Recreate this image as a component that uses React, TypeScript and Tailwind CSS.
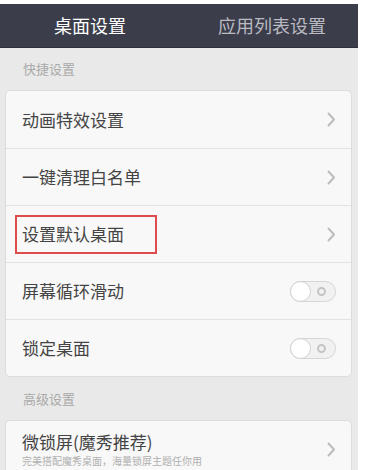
import React from 'react';

const font = { fontFamily: '"Noto Sans CJK SC", "Noto Sans", sans-serif' };

function Chevron() {
  return (
    <svg width="9" height="15" viewBox="0 0 9 15" fill="none" aria-hidden="true">
      <path d="M1.5 1.5 L7 7.5 L1.5 13.5" stroke="#bcbcbc" strokeWidth="2" strokeLinecap="round" strokeLinejoin="round" />
    </svg>
  );
}

function Toggle() {
  return (
    <div className="relative h-[21px] w-[46px] rounded-full border border-[#d6d6d6] bg-[#f1f1f1]">
      <div className="absolute left-[-1px] top-[-1px] h-[21px] w-[21px] rounded-full border border-[#d0d0d0] bg-white" />
      <div className="absolute right-[9px] top-[5px] h-[9px] w-[9px] rounded-full border-2 border-[#c4c4c4]" />
    </div>
  );
}

type Row = { label: string; kind: 'link' | 'toggle'; marked?: boolean };

const quick: Row[] = [
  { label: '动画特效设置', kind: 'link' },
  { label: '一键清理白名单', kind: 'link' },
  { label: '设置默认桌面', kind: 'link', marked: true },
  { label: '屏幕循环滑动', kind: 'toggle' },
  { label: '锁定桌面', kind: 'toggle' },
];

export default function App() {
  return (
    <div className="h-[470px] w-[367px] overflow-hidden bg-white pt-[4px]" style={font}>
      <div className="w-[358px]">
        {/* Tabs */}
        <div className="flex h-[44px] items-center bg-[#3c3d4b] border-b border-[#2e2f3a]">
          <div className="w-[176px] pl-[4px] text-center text-[18px] text-white">桌面设置</div>
          <div className="flex-1 pl-[10px] text-center text-[18px] text-[#b9bac2]">应用列表设置</div>
        </div>

        <div className="bg-[#e9e9e9] pb-[20px]">
          <div className="flex h-[42px] items-center pl-[23px] text-[13px] text-[#a9a9a9]">快捷设置</div>
          <div className="ml-[5px] w-[347px] overflow-hidden rounded-[5px] border border-[#dcdcdc] bg-[#f8f8f8]">
            {quick.map((r, i) => (
              <div
                key={r.label}
                className={`relative flex h-[57px] items-center justify-between pl-[16px] pr-[15px] ${i > 0 ? 'border-t border-[#e2e2e2]' : ''}`}
              >
                <span className="text-[17px] text-[#444444]">{r.label}</span>
                {r.kind === 'link' ? <Chevron /> : <Toggle />}
                {r.marked && (
                  <div className="absolute left-[9px] top-[9px] h-[39px] w-[142px] border-2 border-[#dd4b4b]" />
                )}
              </div>
            ))}
          </div>

          <div className="flex h-[43px] items-center pl-[23px] pt-[1px] text-[13px] text-[#a9a9a9]">高级设置</div>
          <div className="ml-[5px] w-[347px] rounded-[5px] border border-[#dcdcdc] bg-[#f8f8f8]">
            <div className="flex h-[57px] items-center justify-between pl-[16px] pr-[15px]">
              <div className="flex flex-col">
                <span className="text-[17px] leading-[22px] text-[#444444]">微锁屏(魔秀推荐)</span>
                <span className="text-[10px] leading-[16px] text-[#b0b0b0]">完美搭配魔秀桌面，海量锁屏主题任你用</span>
              </div>
              <Chevron />
            </div>
          </div>
        </div>
      </div>
    </div>
  );
}
